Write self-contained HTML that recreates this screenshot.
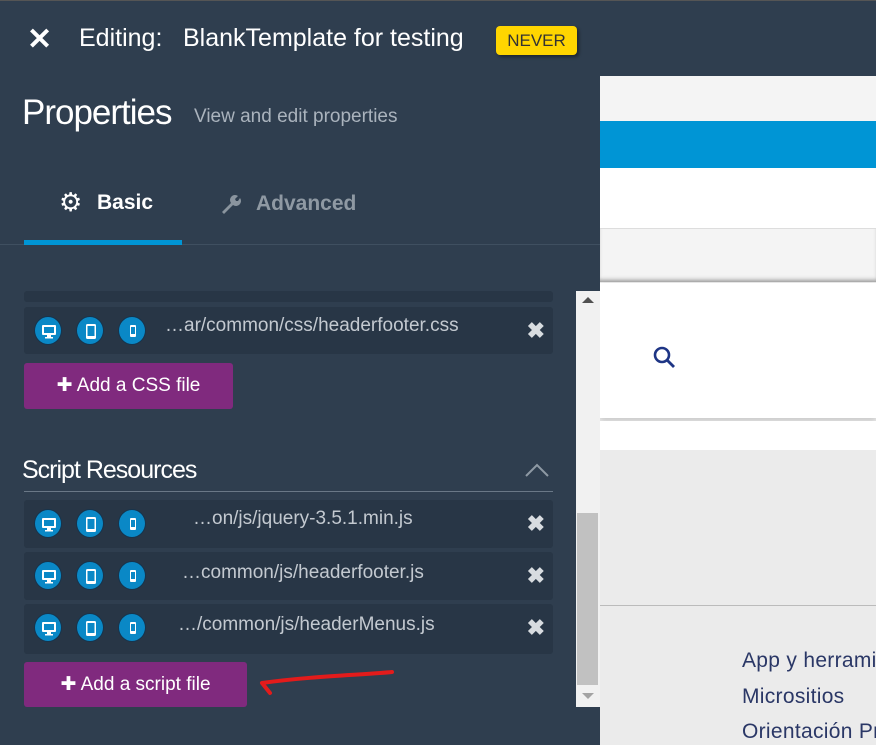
<!DOCTYPE html>
<html><head><meta charset="utf-8"><style>
*{margin:0;padding:0;box-sizing:border-box}
body{width:876px;height:745px;overflow:hidden;background:#2f3e4f;font-family:"Liberation Sans",sans-serif;position:relative;color:#fff}
.abs{position:absolute}
.row{position:absolute;left:24px;width:529px;background:#283646;border-radius:3px}
.ic{position:absolute;top:9px;width:28px;height:29px;border-radius:50%;background:#0a88c6;border:1px solid #16344d}
.ic svg{position:absolute;left:5px;top:5px}
.fn{position:absolute;top:12px;font-size:19px;color:#c3c9d0;white-space:nowrap}
.x{position:absolute;right:8px;top:11px;font-size:22px;font-weight:bold;color:#d8dce0}
.btn{position:absolute;left:24px;background:#802a7e;border-radius:3px;color:#fff;font-size:19px;text-align:center}
</style></head><body>
<svg width="0" height="0" style="position:absolute"><defs>
<g id="d"><rect x="2" y="3" width="14" height="10" fill="#fff" rx="1"/><rect x="4" y="5" width="10" height="6" fill="#0a88c6"/><rect x="7" y="13" width="4" height="2" fill="#fff"/><rect x="5" y="15" width="8" height="1.5" fill="#fff"/></g>
<g id="t"><rect x="4" y="2" width="10" height="15" rx="1.5" fill="#fff"/><rect x="5.5" y="4" width="7" height="10" fill="#0a88c6"/></g>
<g id="p"><rect x="6" y="3" width="6" height="12" rx="1" fill="#fff"/><rect x="7" y="5" width="4" height="7" fill="#0a88c6"/></g>
</defs></svg>
<div class="abs" style="left:0;top:0;width:876px;height:1px;background:#555"></div>
<div class="abs" style="left:27px;top:22px;font-size:30px;font-weight:bold">✕</div>
<div class="abs" style="left:79px;top:24px;font-size:25px">Editing:</div>
<div class="abs" style="left:183px;top:24px;font-size:25px">BlankTemplate for testing</div>
<div class="abs" style="left:496px;top:26px;width:81px;height:29px;background:#ffd500;border-radius:4px;color:#333;font-size:17px;text-align:center;line-height:29px;box-shadow:2px 2px 3px rgba(0,0,0,.4)">NEVER</div>
<div class="abs" style="left:22px;top:93px;font-size:35px;letter-spacing:-1px">Properties</div>
<div class="abs" style="left:194px;top:106px;font-size:19px;color:#aab3bd">View and edit properties</div>
<div class="abs" style="left:59px;top:187px;font-size:26px">⚙</div>
<div class="abs" style="left:97px;top:191px;font-size:21px;font-weight:bold">Basic</div>
<svg class="abs" style="left:219px;top:193px" width="22" height="22" viewBox="0 0 22 22"><path d="M3 19 L12 10 A5 5 0 0 1 19 3 L16 6 L17 8 L19 8 L21 5 A5 5 0 0 1 14 12 L5 21Z" fill="#8a949e"/></svg>
<div class="abs" style="left:256px;top:192px;font-size:21px;font-weight:bold;color:#8f99a3">Advanced</div>
<div class="abs" style="left:0;top:244px;width:600px;height:1px;background:#3f4f60"></div>
<div class="abs" style="left:24px;top:240px;width:158px;height:5px;background:#0095d5"></div>

<div class="row" style="top:291px;height:11px"></div>
<div class="row" style="top:307px;height:47px">
<div class="ic" style="left:10px"><svg width="18" height="18"><use href="#d"/></svg></div><div class="ic" style="left:52px"><svg width="18" height="18"><use href="#t"/></svg></div><div class="ic" style="left:94px"><svg width="18" height="18"><use href="#p"/></svg></div>
<div class="fn" style="left:141px;top:8px">…ar/common/css/headerfooter.css</div><div class="x">✖</div></div>
<div class="btn" style="top:363px;width:209px;height:46px;line-height:46px">✚ Add a CSS file</div>

<div class="abs" style="left:22px;top:456px;font-size:25px;letter-spacing:-1px">Script Resources</div>
<svg class="abs" style="left:524px;top:462px" width="26" height="16"><path d="M2 14 L13 3 L24 14" stroke="#8e99a4" stroke-width="2" fill="none"/></svg>
<div class="abs" style="left:24px;top:491px;width:529px;height:1px;background:#6a7887"></div>

<div class="row" style="top:500px;height:48px"><div class="ic" style="left:10px"><svg width="18" height="18"><use href="#d"/></svg></div><div class="ic" style="left:52px"><svg width="18" height="18"><use href="#t"/></svg></div><div class="ic" style="left:94px"><svg width="18" height="18"><use href="#p"/></svg></div><div class="fn" style="left:169px;top:8px">…on/js/jquery-3.5.1.min.js</div><div class="x">✖</div></div>
<div class="row" style="top:552px;height:48px"><div class="ic" style="left:10px"><svg width="18" height="18"><use href="#d"/></svg></div><div class="ic" style="left:52px"><svg width="18" height="18"><use href="#t"/></svg></div><div class="ic" style="left:94px"><svg width="18" height="18"><use href="#p"/></svg></div><div class="fn" style="left:158px;top:10px">…common/js/headerfooter.js</div><div class="x">✖</div></div>
<div class="row" style="top:604px;height:50px"><div class="ic" style="left:10px"><svg width="18" height="18"><use href="#d"/></svg></div><div class="ic" style="left:52px"><svg width="18" height="18"><use href="#t"/></svg></div><div class="ic" style="left:94px"><svg width="18" height="18"><use href="#p"/></svg></div><div class="fn" style="left:154px;top:10px">…/common/js/headerMenus.js</div><div class="x">✖</div></div>
<div class="btn" style="top:662px;width:223px;height:45px;line-height:45px">✚ Add a script file</div>
<svg class="abs" style="left:252px;top:668px" width="145" height="30"><path d="M140 4 C110 7 60 8 10 15 M10 15 L18 25" stroke="#e31b1b" stroke-width="4" fill="none" stroke-linecap="round"/></svg>

<div class="abs" style="left:576px;top:291px;width:24px;height:416px;background:#f1f1f1"></div>
<div class="abs" style="left:577px;top:513px;width:21px;height:172px;background:#c1c1c1"></div>
<div class="abs" style="left:582px;top:297px;width:0;height:0;border-left:6px solid transparent;border-right:6px solid transparent;border-bottom:6px solid #505050"></div>
<div class="abs" style="left:582px;top:693px;width:0;height:0;border-left:6px solid transparent;border-right:6px solid transparent;border-top:6px solid #a3a3a3"></div>

<div class="abs" style="left:600px;top:76px;width:276px;height:669px;background:#ebebeb;overflow:hidden">
<div class="abs" style="left:0;top:0;width:276px;height:45px;background:#f4f4f4"></div>
<div class="abs" style="left:0;top:45px;width:276px;height:47px;background:#0095d5"></div>
<div class="abs" style="left:0;top:92px;width:276px;height:61px;background:#fff;border-bottom:1px solid #ddd"></div>
<div class="abs" style="left:0;top:153px;width:276px;height:53px;background:#f4f4f4;box-shadow:inset 0 -4px 4px -2px #999"></div>
<div class="abs" style="left:0;top:207px;width:276px;height:135px;background:#fff;box-shadow:0 3px 6px rgba(0,0,0,.15)"></div>
<div class="abs" style="left:0;top:345px;width:276px;height:29px;background:#fff"></div>
<svg class="abs" style="left:52px;top:269px" width="26" height="26"><circle cx="10" cy="10" r="7" stroke="#1e3585" stroke-width="2.6" fill="none"/><path d="M15 15 L22 22" stroke="#1e3585" stroke-width="2.8"/></svg>
<div class="abs" style="left:0;top:529px;width:276px;height:1px;background:#bbb"></div>
<div class="abs" style="left:142px;top:567px;font-size:21px;line-height:35.5px;color:#2a3766;white-space:nowrap;letter-spacing:0.3px">App y herramientas<br>Micrositios<br>Orientación Profesional</div>
</div>
</body></html>
